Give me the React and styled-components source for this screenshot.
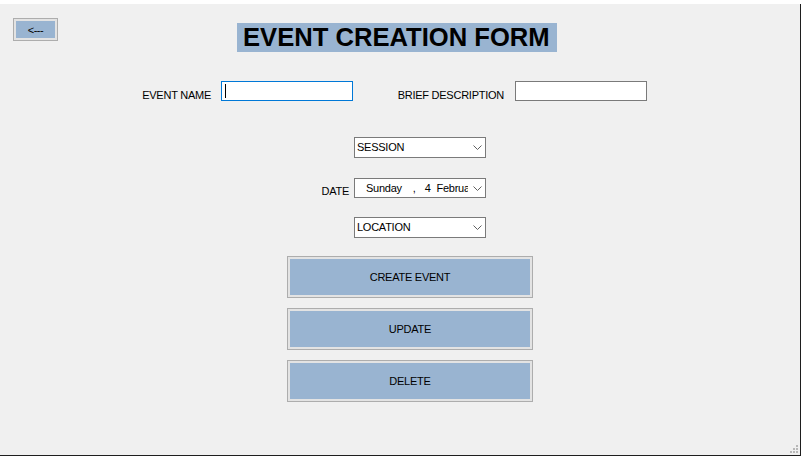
import React from "react";
import styled, { createGlobalStyle } from "styled-components";

const GlobalStyle = createGlobalStyle`
  html, body {
    margin: 0;
    padding: 0;
    background: #ffffff;
  }
  body {
    font-family: "Liberation Sans", Arial, sans-serif;
    font-size: 11px;
    letter-spacing: -0.25px;
    color: #000000;
  }
`;

const FormWindow = styled.div`
  position: relative;
  margin-top: 4px;
  width: 800px;
  height: 451px;
  background: #f0f0f0;
  border-right: 1px solid #1e1e1e;
  border-bottom: 1px solid #1e1e1e;
`;

const Header = styled.div`
  display: flex;
  align-items: flex-start;
  padding: 14px 0 0 13px;
`;

const WinButton = styled.button`
  box-sizing: border-box;
  width: ${(p) => p.$width}px;
  height: ${(p) => p.$height}px;
  margin: 0;
  padding: 0;
  border: 1px solid #adadad;
  box-shadow: inset 0 0 0 2px #e3e3e3;
  background: #99b4d1;
  font-family: "Liberation Sans", Arial, sans-serif;
  font-size: 11px;
  letter-spacing: ${(p) => p.$spacing || "-0.25px"};
  color: #000000;
  text-align: center;
  cursor: pointer;
`;

const Title = styled.h1`
  box-sizing: border-box;
  width: 320px;
  height: 29px;
  margin: 5px 0 0 179px;
  padding-left: 6px;
  background: #99b4d1;
  font-size: 25.6px;
  font-weight: bold;
  letter-spacing: 0;
  line-height: 29px;
  white-space: nowrap;
  overflow: hidden;
`;

const FieldsRow = styled.div`
  display: flex;
  align-items: flex-start;
  height: 20px;
  margin-top: 29px;
  padding-left: 131px;
`;

const Label = styled.span`
  width: ${(p) => p.$width}px;
  margin-top: 8px;
  margin-right: ${(p) => p.$gap}px;
  line-height: 12px;
  text-align: right;
  white-space: nowrap;
`;

const TextBox = styled.div`
  position: relative;
  box-sizing: border-box;
  width: 132px;
  height: 20px;
  background: #ffffff;
  border: 1px solid ${(p) => (p.$focused ? "#0078d7" : "#7a7a7a")};

  ${(p) =>
    p.$focused &&
    `
    &::before {
      content: "";
      position: absolute;
      left: 3px;
      top: 2px;
      width: 1px;
      height: 14px;
      background: #000000;
    }
  `}
`;

const PickerGrid = styled.div`
  display: grid;
  grid-template-columns: 354px 132px;
  align-items: start;
  margin-top: 36px;
`;

const GridLabel = styled.span`
  justify-self: end;
  margin-right: 5px;
  margin-top: ${(p) => p.$top + 7}px;
  line-height: 12px;
`;

const Combo = styled.div`
  grid-column: 2;
  box-sizing: border-box;
  display: flex;
  align-items: center;
  justify-content: space-between;
  height: ${(p) => p.$height}px;
  margin-top: ${(p) => p.$top || 0}px;
  padding: 0 3px 0 2px;
  background: #ffffff;
  border: 1px solid #7a7a7a;
  line-height: 17px;
`;

const DateText = styled.div`
  display: flex;
  width: 111px;
  padding-left: 9px;
  overflow: hidden;
  white-space: nowrap;
  box-sizing: border-box;
`;

const DatePart = styled.span`
  margin-left: ${(p) => p.$offset || 0}px;
`;

const ButtonStack = styled.div`
  display: flex;
  flex-direction: column;
  gap: 10px;
  margin-top: 18px;
  padding-left: 287px;
`;

const Grip = styled.svg`
  position: absolute;
  right: 2px;
  bottom: 2px;
`;

const Chevron = () => (
  <svg width="9" height="5" viewBox="0 0 9 5">
    <polyline
      points="0.5,0.5 4.5,4.5 8.5,0.5"
      fill="none"
      stroke="#606060"
      strokeWidth="1"
    />
  </svg>
);

const App = () => {
  return (
    <>
      <GlobalStyle />
      <FormWindow>
        <Header>
          <WinButton $width={45} $height={23} $spacing="-0.5px">
            &lt;---
          </WinButton>
          <Title>EVENT CREATION FORM</Title>
        </Header>

        <FieldsRow>
          <Label $width={80} $gap={10}>
            EVENT NAME
          </Label>
          <TextBox $focused />
          <Label $width={151} $gap={11}>
            BRIEF DESCRIPTION
          </Label>
          <TextBox />
        </FieldsRow>

        <PickerGrid>
          <Combo $height={21}>
            <span>SESSION</span>
            <Chevron />
          </Combo>
          <GridLabel $top={20}>DATE</GridLabel>
          <Combo $height={20} $top={20}>
            <DateText>
              <DatePart>Sunday</DatePart>
              <DatePart $offset={11}>,</DatePart>
              <DatePart $offset={9}>4</DatePart>
              <DatePart $offset={6}>February 2024</DatePart>
            </DateText>
            <Chevron />
          </Combo>
          <Combo $height={21} $top={19}>
            <span>LOCATION</span>
            <Chevron />
          </Combo>
        </PickerGrid>

        <ButtonStack>
          <WinButton $width={246} $height={42}>
            CREATE EVENT
          </WinButton>
          <WinButton $width={246} $height={42}>
            UPDATE
          </WinButton>
          <WinButton $width={246} $height={42}>
            DELETE
          </WinButton>
        </ButtonStack>

        <Grip width="8" height="8" viewBox="0 0 8 8">
          <rect x="6" y="0" width="2" height="2" fill="#b8b8b8" />
          <rect x="3" y="3" width="2" height="2" fill="#b8b8b8" />
          <rect x="6" y="3" width="2" height="2" fill="#b8b8b8" />
          <rect x="0" y="6" width="2" height="2" fill="#b8b8b8" />
          <rect x="3" y="6" width="2" height="2" fill="#b8b8b8" />
          <rect x="6" y="6" width="2" height="2" fill="#b8b8b8" />
        </Grip>
      </FormWindow>
    </>
  );
};

export default App;
